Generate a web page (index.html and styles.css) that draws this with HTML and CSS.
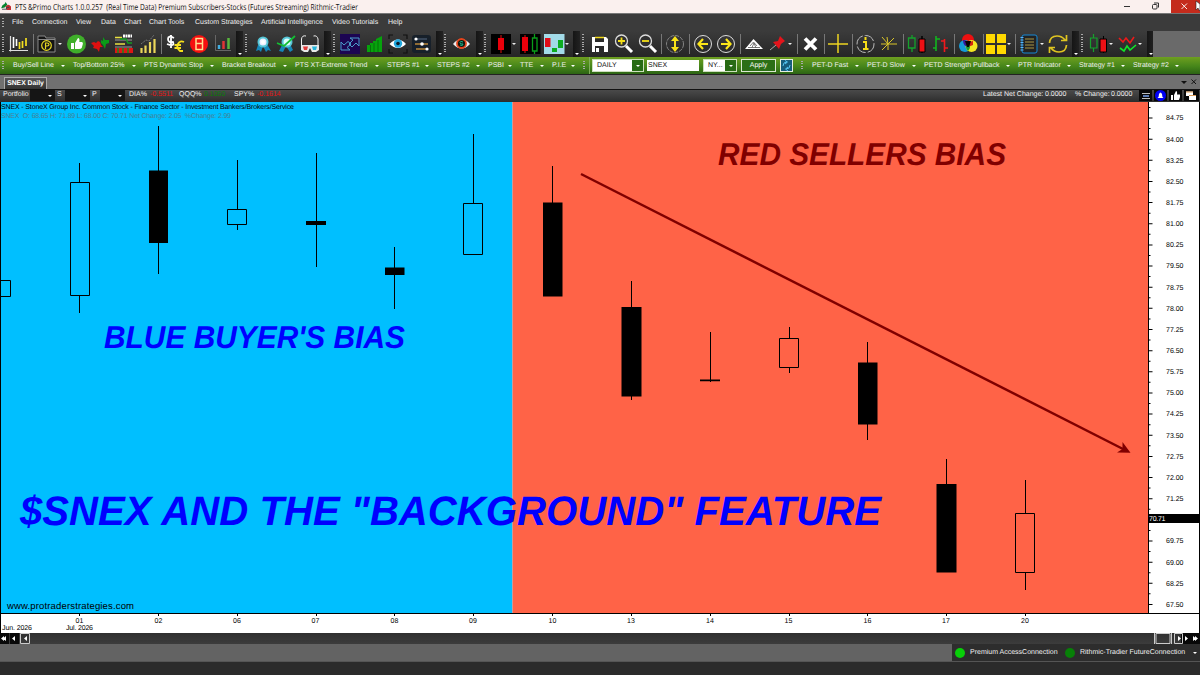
FILE: index.html
```html
<!DOCTYPE html>
<html lang="en-US">
<head>
	<meta charset="UTF-8">
	<meta name="viewport" content="width=device-width, initial-scale=1.0">
	<title>PTS &amp;Primo Charts</title>
	<link rel="stylesheet" href="styles.css">
</head>
<body>

	<!-- window title -->
	<div class="titlebar">
		<svg class="logo" viewBox="0 0 12 10"><path d="M0 7Q1 3 4 2L5 0L7 3L4 6Z" fill="#08852f"/><path d="M5 5Q8 1 11 5V9H6Z" fill="#c42c31"/><path d="M1 8H6V6H9" stroke="#444" fill="none"/></svg>
		<span class="title"><svg width="345" height="14"><text x="0" y="10.3" textLength="343" lengthAdjust="spacingAndGlyphs" xml:space="preserve">PTS &amp;Primo Charts 1.0.0.257  (Real Time Data) Premium Subscribers-Stocks (Futures Streaming) Rithmic-Tradier</text></svg></span>
		<svg class="window-buttons" viewBox="0 0 80 14">
			<path d="M4 6.5H10" stroke="#333"/>
			<rect x="32.500" y="4.500" width="4.500" height="4.500" rx="1" fill="none" stroke="#333"/><path d="M34 3H38.500V7.500" fill="none" stroke="#333"/>
			<rect x="51" width="29" height="13" fill="#c42b1c"/>
			<path d="M61.500 3.500L67 9M67 3.500L61.500 9" stroke="#fff" stroke-width=".9"/>
			<path d="M76 1V10L78 8L79.500 11L80 10V4Z" fill="#fff" stroke="#222" stroke-width=".6"/>
		</svg>
	</div>

	<div class="menu">
		<i class="grip"></i>
		<span>File</span><span>Connection</span><span>View</span><span>Data</span><span>Chart</span><span>Chart Tools</span><span>Custom Strategies</span><span>Artificial Intelligence</span><span>Video Tutorials</span><span>Help</span>
	</div>

	<!-- icons -->
	<div class="toolbar">
		<i class="grip"></i>
		<svg viewBox="0 0 20 20"><path d="M1.500 2V17.500M0 16.500H19" stroke="#ddd" stroke-width="1.200"/><path d="M4.500 3V14M7.500 5V12" stroke="#fff" stroke-width="1.600"/><path d="M10.500 8V15M13.500 7V14M17 4V12" stroke="#f4df20" stroke-width="1.700"/></svg>
		<i class="sep"></i>
		<svg viewBox="0 0 20 20"><path d="M1 18V2H8L9 4H18V18Z" fill="#151515" stroke="#888"/><path d="M1 5.500H18" stroke="#888"/><circle cx="9.500" cy="11.500" r="4.800" fill="none" stroke="#e9d923" stroke-width="1.200"/><path d="M8.500 15V9H10Q12 9 12 10.500T10 12H8" fill="none" stroke="#e9d923" stroke-width="1.200"/></svg>
		<i class="dd"></i>
		<svg viewBox="0 0 20 20"><circle cx="9.500" cy="10" r="9.500" fill="#3fae2a"/><path d="M4 9H7V15H4ZM8 9L11 4Q13 4 12.300 8H15Q16.500 8.500 15.700 10.500L14.700 14Q14 15 12 15H8Z" fill="#fff"/></svg>
		<svg viewBox="0 0 20 20"><path d="M0 9L3 8L5 9L7 7L9 8L10 11L12 13L9 13L8 18L6 15L2 14L3 12Z" fill="#e01010"/><path d="M10 6L12 7L12 3L14 6L18 6L18 9L15 10L14 15L12 11L10 9Z" fill="#0a9c18"/></svg>
		<svg viewBox="0 0 20 20"><path d="M1 3.500H8M1 10H11" stroke="#e9e040" stroke-width="1.600"/><path d="M1 6H18M1 13H18" stroke="#999"/><path d="M9 2H18" stroke="#fff" stroke-width="3" stroke-dasharray="2 .5"/><path d="M6 5H12L14 9H18" stroke="#159c20" stroke-width="1.500" fill="none"/><path d="M1 16.500H19" stroke="#dd1515" stroke-width="5"/><path d="M4 14V19M9 14V19M14 14V19" stroke="#18891c" stroke-width="1.500"/></svg>
		<svg viewBox="0 0 20 20"><path d="M3.500 19V14M7.500 19V11.500M12 19V8M16.500 19V5" stroke="#ead65a" stroke-width="2.200"/><path d="M3 10L8 6L11 7L16 1" stroke="#777" stroke-dasharray="2 1" fill="none"/></svg>
		<i class="sep"></i>
		<svg viewBox="0 0 20 20"><path d="M8 4Q2 1 2 5T7 8Q9 13 1 10M5 1V14" fill="none" stroke="#fff" stroke-width="1.800"/><path d="M18 8Q14 6 12 10T14 17H17M8.500 11H15M8.500 14H15" fill="none" stroke="#f5df1c" stroke-width="1.800"/></svg>
		<svg viewBox="0 0 20 20"><circle cx="9" cy="10" r="9" fill="#f60f0f"/><rect x="6" y="4.500" width="6.500" height="11" fill="#f60f0f" stroke="#ffdf90" stroke-width="1.500"/><path d="M6 9.500H12" stroke="#ffdf90" stroke-width="1.500"/></svg>
		<svg viewBox="0 0 20 20"><path d="M1.500 1V16.500H17" stroke="#666" fill="none"/><path d="M5 15V11" stroke="#42aee0" stroke-width="2.500"/><path d="M9.500 15V7" stroke="#e33436" stroke-width="2.500"/><path d="M14.500 15V4" stroke="#58b73e" stroke-width="2.500"/></svg>
		<i class="overflow"></i><i class="grip"></i>
		<svg viewBox="0 0 20 20"><path d="M4 11L2 17L5 16L7 18L9 12L12 18L14 16L17 17L13 10Z" fill="#1687b9"/><circle cx="9" cy="8" r="4.500" fill="#eef" stroke="#56c6d6" stroke-width="2"/><circle cx="9" cy="8" r="2" fill="#fff"/></svg>
		<svg viewBox="0 0 20 20"><path d="M6 11L3 17L7 18L10 12L14 18L17 16L14 10Z" fill="#1687b9"/><circle cx="11" cy="8" r="4.500" fill="#dff" stroke="#56c6d6" stroke-width="2"/><path d="M1 9L8 12L19 2" fill="none" stroke="#13bf32" stroke-width="1.700"/></svg>
		<svg viewBox="0 0 20 20"><path d="M1.500 12V5Q2 1 6 2M18 12V5Q17 1 13.500 2" fill="none" stroke="#eee"/><path d="M1 11H19V16L16 18H12L10 14L8 18H4L1 16Z" fill="#e8e8e8"/><path d="M3 12.500H8L7 16H4Z" fill="#e23b3b"/><path d="M12 12.500H17L16 16H13Z" fill="#26b4da"/></svg>
		<i class="overflow"></i><i class="grip"></i>
		<svg viewBox="0 0 20 20"><path d="M0 0H20V20H0Z" fill="#1c0552"/><path d="M1 8V16H10L7 13.500L11 10L8 7.500L4 11ZM10 4H19V12L16 9L12 13L9 10L13 6Z" fill="none" stroke="#4a9cca"/></svg>
		<svg viewBox="0 0 20 20"><path d="M1 18V11H4V9H7V7H10V5L16 2V18Z" fill="#06a30c"/><path d="M4.500 11V18M8 9V18M12 6V18" stroke="#075d0a" stroke-width=".7"/></svg>
		<svg viewBox="0 0 20 20"><path d="M1 5V1H5M15 1H19V5M19 15V19H15M5 19H1V15" fill="none" stroke="#111" stroke-width="1.200"/><path d="M1.500 10Q10 1 18 10Q10 18 1.500 10Z" fill="#fff"/><circle cx="10" cy="9.500" r="4.200" fill="#20a7de"/><circle cx="10" cy="9.500" r="1.800" fill="#081b29"/></svg>
		<svg viewBox="0 0 20 20"><rect y="1" width="19" height="18" rx="3" fill="#17202a"/><path d="M3 5H15" stroke="#425066" stroke-width="1.500"/><path d="M3 10H16M4 15H16" stroke="#b98538" stroke-width="1.500"/><circle cx="4" cy="5" r="1.600" fill="#fff"/><circle cx="10" cy="10" r="1.800" fill="#fff"/><circle cx="15" cy="15" r="1.600" fill="#fff"/></svg>
		<i class="overflow"></i><i class="grip"></i>
		<svg viewBox="0 0 20 20"><path d="M1 10Q9.500 0 18 10Q9.500 19 1 10Z" fill="#eee"/><circle cx="9.500" cy="9.500" r="4.500" fill="#12160e" stroke="#e4431b" stroke-width="1.800"/><path d="M11 8Q8 6.500 8 8.500T11 10Q11 12.500 8 11" fill="none" stroke="#19b58d"/></svg>
		<i class="overflow"></i><i class="grip"></i>
		<svg viewBox="0 0 20 20"><path d="M0 0H20V20H0Z" fill="#000"/><path d="M10 1V19" stroke="#d11"/><path d="M7 4H13V16H7Z" fill="#e9000b"/></svg>
		<i class="dd"></i>
		<svg viewBox="0 0 20 20"><path d="M0 0H20.500V20H0Z" fill="#000"/><path d="M5 1V19" stroke="#d11"/><path d="M2 3H8V17H2Z" fill="#e9000b"/><path d="M14.500 0V4M14.500 17V20M12.500 4H17V17H12.500Z" stroke="#099e1a" fill="none" stroke-width="1.300"/></svg>
		<svg viewBox="0 0 20 20"><path d="M0 0H20.500V20H0Z" fill="#a3dbe8"/><path d="M1 4H6.500V13H1Z" fill="#e00c17"/><path d="M8 14H13V18H8ZM14 6H19V14H14Z" fill="#0cac20"/></svg>
		<i class="dd"></i><i class="overflow"></i><i class="grip"></i>
		<svg viewBox="0 0 20 20"><path d="M2 3H16L18 5V18H2Z" fill="#fff"/><path d="M5 3H14V8H5Z" fill="#292929"/><path d="M5 3.500H14" stroke="#f1d81a" stroke-width="1.500"/><path d="M5 12H14V18H5Z" fill="#292929"/><path d="M6 14H9V18H6Z" fill="#fff"/></svg>
		<svg viewBox="0 0 20 20"><circle cx="7.500" cy="7" r="6" fill="#303030" stroke="#ddd" stroke-width="1.300"/><path d="M12 12L18 18" stroke="#fff" stroke-width="3"/><path d="M4 7H11M7.500 3.500V10.500" stroke="#f4df18" stroke-width="1.800"/></svg>
		<svg viewBox="0 0 20 20"><circle cx="7.500" cy="7" r="6" fill="#303030" stroke="#ddd" stroke-width="1.300"/><path d="M12 12L18 18" stroke="#fff" stroke-width="3"/><path d="M4 7H11" stroke="#f4df18" stroke-width="1.800"/></svg>
		<i class="sep"></i>
		<svg viewBox="0 0 20 20"><circle cx="9" cy="10" r="8.500" fill="none" stroke="#999" stroke-width=".8" stroke-dasharray="4 1"/><path d="M9 2L13 7H10V13H13L9 18L5 13H8V7H5Z" fill="#f8e319"/></svg>
		<i class="sep"></i>
		<svg viewBox="0 0 20 20"><circle cx="10" cy="10" r="8.500" fill="none" stroke="#ddd"/><path d="M10 5L5.500 10L10 15M5.500 10H15" fill="none" stroke="#fce619" stroke-width="2.200"/></svg>
		<svg viewBox="0 0 20 20"><circle cx="9" cy="10" r="8.500" fill="none" stroke="#ddd"/><path d="M9 5L13.500 10L9 15M13.500 10H4" fill="none" stroke="#fce619" stroke-width="2.200"/></svg>
		<i class="sep"></i>
		<svg viewBox="0 0 20 20"><path d="M1 15L9.500 5L19 15Z" fill="#fff"/><path d="M6 12L9.500 8L13 12M4 13.500H16M8 13.500L10 9L12 14" fill="none" stroke="#555" stroke-width=".8"/></svg>
		<svg viewBox="0 0 20 20"><path d="M2 16L8 11" stroke="#aaa"/><path d="M12 2L17 7L13 10L11 15L5 8L10 7Z" fill="#e3141b"/></svg>
		<i class="dd"></i><i class="sep"></i>
		<svg viewBox="0 0 20 20"><path d="M4 4.500L15 15.500M15 4.500L4 15.500" stroke="#fff" stroke-width="3.800"/></svg>
		<i class="sep"></i>
		<svg viewBox="0 0 20 20"><path d="M0 10H20M10 0V19" stroke="#edd421" stroke-width="1.500"/></svg>
		<i class="sep"></i>
		<svg viewBox="0 0 20 20"><circle cx="9.500" cy="10" r="8.500" fill="none" stroke="#bbb" stroke-dasharray="11 2"/><path d="M9.500 3V6M7 8H10V14M7 15H12.500" fill="none" stroke="#f5dc18" stroke-width="2"/></svg>
		<svg viewBox="0 0 20 20"><path d="M3 10H19M10 10L4 3M10 10L9 3M10 10L16 4M10 10L4 16M10 10L10 16" stroke="#dbc629"/></svg>
		<i class="sep"></i>
		<svg viewBox="0 0 20 20"><path d="M5 1V4M5 14V18M1.500 4H8V14H1.500Z" fill="none" stroke="#15a22c" stroke-width="1.300"/><path d="M15 2V19" stroke="#000" stroke-width="1.500"/><path d="M12 5H18V18H12Z" fill="#ed1015" stroke="#000"/></svg>
		<svg viewBox="0 0 20 20"><path d="M6 2V17M3 14H6M6 5H10" fill="none" stroke="#12b51f" stroke-width="1.600"/><path d="M14.500 5V18M11 7H15M15 14H18" fill="none" stroke="#f1191d" stroke-width="1.600"/></svg>
		<i class="sep"></i>
		<svg viewBox="0 0 20 20"><circle cx="9" cy="6" r="6" fill="#ed1010"/><circle cx="6" cy="12" r="6" fill="#159bd9"/><circle cx="12.500" cy="12" r="6" fill="#f3e622"/><path d="M4 6Q9 5 9 13Q4 12 4 6Z" fill="#3a1596"/><path d="M14 7Q9 7 9 13L14 11Z" fill="#d62711"/><path d="M9 10Q13 13 9 17Q5 13 9 10Z" fill="#159c37"/><path d="M6 7H12L10 13H8Z" fill="#050505"/></svg>
		<i class="sep"></i>
		<svg viewBox="0 0 20 20"><path d="M0 0H9V9H0ZM11 0H20V9H11ZM0 11H9V20H0ZM11 11H20V20H11Z" fill="#ffd900"/></svg>
		<i class="dd"></i><i class="sep"></i>
		<svg viewBox="0 0 20 20"><rect x="3" y="1" width="15" height="18" rx="2" fill="#222" stroke="#1689d6"/><path d="M3 3V18" stroke="#58b6ff" stroke-width="3" stroke-dasharray="1 1.500"/><path d="M6 5H15M6 8H15M6 11H15M6 14H15" stroke="#a99645"/></svg>
		<i class="dd"></i>
		<svg viewBox="0 0 20 20"><path d="M1.500 9Q2 2 9 2Q14 2 17 6M18.500 1V6.500H13M18.500 11Q18 18 11 18Q6 18 3 14M1.500 19V13.500H7" fill="none" stroke="#dfc421" stroke-width="1.700"/></svg>
		<i class="overflow"></i><i class="grip"></i>
		<svg viewBox="0 0 20 20"><path d="M4.500 0V4M4.500 14V18M1.500 4H8V14H1.500Z" fill="none" stroke="#15a22c" stroke-width="1.200"/><path d="M14.500 2V19" stroke="#000"/><path d="M11 5H17.500V18H11Z" fill="#ed1015" stroke="#000"/></svg>
		<i class="dd"></i>
		<svg viewBox="0 0 20 20"><path d="M1 4L5 8L8 4L12 9L16 3" fill="none" stroke="#ed1919" stroke-width="1.600"/><path d="M2 14L6 17L9 12L12 16L18 11" fill="none" stroke="#12e529" stroke-width="1.600"/></svg>
		<i class="dd"></i><i class="overflow"></i><i class="empty"></i>
	</div>

	<div class="strategies">
		<i class="grip"></i>
		<span class="drop">Buy/Sell Line</span><span class="drop">Top/Bottom 25%</span><span class="drop">PTS Dynamic Stop</span><span class="drop">Bracket Breakout</span><span class="drop">PTS XT-Extreme Trend</span><span class="drop">STEPS #1</span><span class="drop">STEPS #2</span><span class="drop">PSBI</span><span class="drop">TTE</span><span class="drop">P.I.E</span>
		<i class="grip"></i>
		<div class="inputs">
			<span class="combo daily">DAILY</span>
			<span class="symbol">SNEX</span>
			<span class="combo exchange">NY...</span>
			<span class="apply">Apply</span>
			<svg class="reload" viewBox="0 0 13 13"><path d="M0 0H13V13H0Z" fill="#e8efe0"/><path d="M1 1H12V12H1Z" fill="#175c7c"/><path d="M3 7Q3 3 7 3M5 1.500L7.500 3L5 5M10 6Q10 10 6 10M8 8L5.500 10L8 12" fill="none" stroke="#55c2f0"/></svg>
		</div>
		<i class="grip"></i>
		<span class="drop">PET-D Fast</span><span class="drop">PET-D Slow</span><span class="drop">PETD Strength Pullback</span><span class="drop">PTR Indicator</span><span class="drop">Strategy #1</span><span class="drop">Strategy #2</span>
	</div>

	<div class="tabs">
		<span class="tab">SNEX Daily</span>
		<svg viewBox="0 0 20 10"><path d="M1 4H7L4 7Z" fill="#111"/><path d="M11.500 2.500L16 7M16 2.500L11.500 7" stroke="#111"/></svg>
	</div>

	<div class="portfolio">
		<span>Portfolio</span><i class="pick"></i><span>S</span><i class="pick"></i><span>P</span><i class="pick"></i>
		<span>DIA%</span><span class="down">-0.5511</span><span>QQQ%</span><span class="up">0.1050</span><span>SPY%</span><span class="down">-0.1614</span>
		<span>Latest Net Change:</span><span>0.0000</span><span>% Change:</span><span>0.0000</span>
		<svg viewBox="0 0 62 11">
			<path d="M0 0H13V11H0ZM15 0H28V11H15ZM30 0H43V11H30ZM45 0H60V11H45Z" fill="#080808"/>
			<path d="M3 3.500H11M3 8.500H11" stroke="#bbb"/><path d="M4 6H10" stroke="#5b7bb5" stroke-width="2"/>
			<circle cx="21.500" cy="5.500" r="5.500" fill="#0000f4"/><path d="M18.500 8Q20 7 20 4Q21.500 1 23 4Q23 7 24.500 8Z" fill="#fff"/>
			<path d="M32 5H34V10H32ZM35 5L37 1Q38.500 1 38 4.500H41V7L40 10H35Z" fill="#fff"/>
			<path d="M47 1.500H54V6H47ZM50 5H57V10H50Z" fill="#fff"/><path d="M47 2H54M50 5.500H57" stroke="#dc9a56"/>
		</svg>
	</div>

	<!-- chart: page pixels are used as the svg units -->
	<svg class="chart" viewBox="0 102 1200 531">
		<rect y="102" width="1200" height="531" fill="#fff"/>
		<rect y="102" width="512.500" height="511" fill="#00bfff"/>
		<rect x="512.500" y="102" width="636" height="511" fill="#ff6347"/>
		<path class="frame" d="M.5 102V633M0 613.500H1200M1148.500 102V613M1199.500 102V633"/>

		<g class="candles">
			<path d="M.5 228V360M79.500 163V182.500M79.500 295.500V313M158.500 126V274M237.500 160V210M237.500 225V230M316.500 153V267M394.500 247V309M473.500 134V203.500M552.500 166V296M631.500 281V400M710.500 332V382M789.500 327V338.500M789.500 367.500V373M867.500 342V440M946.500 459V572M1025.500 480V514M1025.500 572V590"/>
			<path class="open" d="M.5 280.500H10.500V296.500H.5ZM70.500 182.500H89.500V295.500H70.500ZM227.500 209.500H246.500V224.500H227.500ZM463.500 203.500H482.500V254.500H463.500ZM779.500 338.500H798.500V367.500H779.500ZM1015.500 513.500H1034.500V572.500H1015.500Z"/>
			<path class="filled" d="M149 170.500H168V243H149ZM306 221H326V225H306ZM385 267.500H404.500V275H385ZM543 202.500H562.500V296.500H543ZM621.500 307H641.500V396.500H621.500ZM700 379.500H720V381.300H700ZM858 362.500H877.500V424.500H858ZM936.500 484H956.500V572.500H936.500Z"/>
		</g>

		<path d="M581 174L1124 449.500" stroke="#800000" stroke-width="2.500"/>
		<path d="M1130.500 452.800L1122.500 442L1122.500 449L1117 452.500Z" fill="#800000"/>

		<text class="note" x="104" y="347.500" font-size="31.500" textLength="301" lengthAdjust="spacingAndGlyphs" fill="#0000ff">BLUE BUYER'S BIAS</text>
		<text class="note" x="718" y="164.500" font-size="31.500" textLength="288" lengthAdjust="spacingAndGlyphs" fill="#800000">RED SELLERS BIAS</text>
		<text class="note" x="20" y="525" font-size="41.200" textLength="861" lengthAdjust="spacingAndGlyphs" fill="#0000ff">$SNEX AND THE "BACKGROUND" FEATURE</text>

		<text x="1" y="108.700" textLength="293">SNEX - StoneX Group Inc. Common Stock - Finance Sector - Investment Bankers/Brokers/Service</text>
		<text class="quote" x="1" y="118" textLength="230" xml:space="preserve">SNEX  O: 68.65 H: 71.89 L: 68.00 C: 70.71 Net Change: 2.05  %Change: 2.99</text>
		<text x="7" y="608.500" font-size="9.500" textLength="127">www.protraderstrategies.com</text>

		<path class="tick" d="M79.500 613V616M158.500 613V616M237.500 613V616M316.500 613V616M394.500 613V616M473.500 613V616M552.500 613V616M631.500 613V616M710.500 613V616M789.500 613V616M867.500 613V616M946.500 613V616M1025.500 613V616"/>
		<g class="dates">
			<text x="79.500" y="622.500">01</text><text x="158.500" y="622.500">02</text><text x="237" y="622.500">06</text><text x="315.500" y="622.500">07</text><text x="394.500" y="622.500">08</text><text x="473" y="622.500">09</text><text x="552.500" y="622.500">10</text><text x="631" y="622.500">13</text><text x="710" y="622.500">14</text><text x="788.500" y="622.500">15</text><text x="867.500" y="622.500">16</text><text x="946" y="622.500">17</text><text x="1025" y="622.500">20</text>
			<text x="17" y="630" textLength="30">Jun. 2026</text><text x="79.500" y="630" textLength="27">Jul. 2026</text>
		</g>

		<line class="scale" x1="1150.500" x2="1150.500" y1="117.500" y2="606"/>
		<line class="scale half" x1="1149.500" x2="1149.500" y1="106.900" y2="606"/>
		<g class="prices">
			<text x="1166" y="120.300">84.75</text><text x="1166" y="141.500">84.00</text><text x="1166" y="162.600">83.25</text><text x="1166" y="183.800">82.50</text><text x="1166" y="204.900">81.75</text><text x="1166" y="226.100">81.00</text><text x="1166" y="247.200">80.25</text><text x="1166" y="268.400">79.50</text><text x="1166" y="289.500">78.75</text><text x="1166" y="310.700">78.00</text><text x="1166" y="331.800">77.25</text><text x="1166" y="353">76.50</text><text x="1166" y="374.100">75.75</text><text x="1166" y="395.300">75.00</text><text x="1166" y="416.400">74.25</text><text x="1166" y="437.600">73.50</text><text x="1166" y="458.700">72.75</text><text x="1166" y="479.900">72.00</text><text x="1166" y="501">71.25</text><text x="1166" y="543.300">69.75</text><text x="1166" y="564.500">69.00</text><text x="1166" y="585.600">68.25</text><text x="1166" y="606.800">67.50</text>
		</g>
		<rect x="1148" y="514" width="52" height="9" fill="#000"/>
		<text x="1149" y="521" fill="#fff" textLength="16.500">70.71</text>
	</svg>

	<div class="scrollbar">
		<svg viewBox="0 0 30 11"><path d="M0 0H9V11H0ZM10 0H19V11H10Z" fill="#080808"/><path d="M4 3V8L1 5.500ZM6 3V8L3 5.500ZM15 3V8L12 5.500ZM27 3V8L24 5.500Z" fill="#fff"/><path d="M20.500 .5H29.500V10.500H20.500Z" fill="none" stroke="#ccc"/></svg>
		<svg class="right" viewBox="0 0 47 11"><path d="M28 0H47V11H28Z" fill="#080808"/><path d="M1.500 0V11M3 .5H17V10.500H3ZM18.500 0V11M21.500 .5H29.500V10.500H21.500Z" fill="none" stroke="#ccc"/><path d="M25 3V8L28 5.500ZM32 3V8L35 5.500ZM40 3V8L43 5.500ZM42 3V8L45 5.500Z" fill="#fff"/></svg>
	</div>

	<div class="status">
		<div class="connections">
			<i class="light"></i><span>Premium AccessConnection</span>
			<i class="light dim"></i><span class="drop">Rithmic-Tradier FutureConnection</span>
		</div>
	</div>

</body>
</html>
```
FILE: styles.css
```css
body {
	margin: 0;
	width: 1200px;
	height: 675px;
	overflow: hidden;
	display: flex;
	flex-direction: column;
	background: #2b2b2b;
	color: #f0f0f0;
	font: 7px/10px "Liberation Sans", Arial, sans-serif;
	text-rendering: geometricPrecision;
	white-space: nowrap;
}
svg {
	display: block;
	overflow: visible;
}

/* title */
.titlebar {
	height: 14px;
	flex: none;
	display: flex;
	background: #faf0ee;
	border-bottom: 1px solid #777;
	box-sizing: border-box;
}
.logo {
	width: 11px;
	height: 9px;
	margin: 2px 3px 0 1px;
}
.title {
	font: 8.4px "Open Sans", "Noto Sans", sans-serif;
}
.title text {
	fill: #111;
}
.window-buttons {
	width: 80px;
	height: 14px;
	margin-left: auto;
	overflow: hidden;
}

/* menu, the columns are the widths of the items */
.menu {
	height: 17px;
	flex: none;
	display: grid;
	grid-template-columns: 10px 20px 44px 25px 23px 25px 46px 66px 71px 56px auto;
	align-items: center;
	padding-left: 2px;
	background: #3b3b3b;
	line-height: 15px;
}
.grip {
	width: 2px;
	height: 10px;
	background: repeating-linear-gradient(#aaa 0 1px, transparent 1px 2.5px);
}

/* icon strip */
.toolbar {
	height: 26px;
	flex: none;
	display: grid;
	grid-template-columns:
		7px 24px 4px 20px 10px 24px 23px 24px 23px 5px 24px 24px 22px 9px
		9px 22px 24px 24px 9px
		7px 26px 22px 24px 24px 8px
		8px 24px 8px
		7px 20px 9px 24px 20px 9px 9px
		8px 24px 24px 23px 5px 23px 4px 24px 23px 4px 24px 19px 10px 4px 23px 4px 24px 4px 22px 25px 4px 23px 24px 5px 24px 3px 20px 9px 4px 20px 9px 24px 9px
		8px 19px 10px 19px 10px 6px 47px;
	align-items: center;
	padding-left: 2px;
	background: linear-gradient(#3b3b3b, #262626);
}
.toolbar svg {
	width: 20px;
	height: 20px;
}
.toolbar .grip {
	height: 20px;
}
.sep {
	width: 1px;
	height: 20px;
	background: #777;
}
.dd {
	width: 0;
	margin-left: 1px;
	border: 2px solid transparent;
	border-top-color: #eee;
	border-bottom: 0;
}
.overflow {
	width: 7px;
	height: 26px;
	background: linear-gradient(90deg, #151515, #222);
	display: flex;
	align-items: flex-end;
}
.overflow::after {
	content: "";
	border: 2px solid transparent;
	border-top-color: #fff;
	border-bottom: 0;
	margin: 0 0 2px 2px;
	box-shadow: 0 -2px 0 -1px #ddd;
}
.empty {
	height: 26px;
	background: #6a6a6a;
}

/* green bar */
.strategies {
	height: 17px;
	flex: none;
	display: grid;
	grid-template-columns: 11px 60px 71px 78px 73px 92px 50px 51px 32px 32px 31px 6px 212px 11px 55px 57px 94px 61px 54px 54px;
	align-items: center;
	padding-left: 2px;
	background: linear-gradient(#6e9f20, #46861a 55%, #2c6414);
	border-bottom: 1px solid #222;
}
.drop {
	display: flex;
	align-items: center;
	justify-content: space-between;
	padding-right: 8px;
}
.drop::after {
	content: "";
	border: 2px solid transparent;
	border-top-color: #fff;
	border-bottom: 0;
}
.inputs {
	height: 17px;
	display: flex;
	align-items: center;
	color: #111;
	border-left: 1px solid #7fae5a;
	padding-left: 2px;
	margin-right: 5px;
}
.combo,
.symbol,
.apply {
	height: 13px;
	line-height: 13px;
	box-sizing: border-box;
	background: #fff;
	padding-left: 4px;
}
.combo {
	display: flex;
	align-items: center;
	justify-content: space-between;
	border: 1px solid #cde0bd;
	background: linear-gradient(90deg, #fff calc(100% - 11px), #286b15 calc(100% - 11px));
}
.combo::after {
	content: "";
	border: 2.5px solid transparent;
	border-top-color: #fff;
	border-bottom: 0;
	margin-right: 3px;
}
.daily {
	width: 52px;
}
.symbol {
	width: 52px;
	height: 11px;
	line-height: 11px;
	margin: 0 4px 1px 3px;
	padding-left: 1px;
}
.exchange {
	width: 34px;
}
.apply {
	width: 35px;
	margin: 0 4px;
	padding: 0;
	border: 1px solid #dce8d2;
	background: #2c6f16;
	color: #fff;
	line-height: 11px;
	text-align: center;
}
.reload {
	width: 13px;
	height: 13px;
}

/* tab */
.tabs {
	height: 14px;
	flex: none;
	display: flex;
	justify-content: space-between;
	align-items: flex-end;
	background: #707070;
	border-bottom: 1px solid #111;
}
.tab {
	height: 12px;
	width: 43px;
	box-sizing: border-box;
	margin-left: 4px;
	border: 1px solid #aaa;
	border-bottom: 0;
	background: linear-gradient(#555, #333);
	font-weight: bold;
	font-size: 6.8px;
	line-height: 11px;
	text-align: center;
	color: #fff;
}
.tabs svg {
	width: 20px;
	height: 10px;
	margin-bottom: 2px;
}

.portfolio {
	height: 12px;
	flex: none;
	display: grid;
	grid-template-columns: 27px 27px 8px 27px 8px 29px 21px 29px 25px 30px 23px 726px 62px 30px 36px 28px 62px;
	align-items: start;
	padding-left: 3px;
	background: linear-gradient(#4a4a4a, #2d2d2d);
	line-height: 9px;
}
.portfolio svg {
	width: 62px;
	height: 11px;
}
.pick {
	width: 25px;
	height: 11px;
	background: #151515;
	display: flex;
	align-items: center;
	justify-content: flex-end;
}
.pick::after {
	content: "";
	border: 2.5px solid transparent;
	border-top-color: #fff;
	border-bottom: 0;
	margin-right: 3px;
}
.up {
	color: #087c08;
}
.down {
	color: #e21414;
}

/* chart */
.chart {
	width: 1200px;
	height: 531px;
	flex: none;
	font-size: 7px;
}
.frame,
.tick,
.candles path {
	stroke: #000;
	fill: none;
}
.candles .filled {
	fill: #000;
	stroke: none;
}
.note {
	font-weight: bold;
	font-style: italic;
}
.quote {
	fill: #477f94;
}
.dates text {
	text-anchor: middle;
}
/* one dash for each 0.75 of price */
.scale {
	stroke: #000;
	stroke-width: 4;
	stroke-dasharray: 1 20.15;
}
.half {
	stroke-width: 2;
}

/* bottom */
.scrollbar {
	height: 11px;
	flex: none;
	display: flex;
	justify-content: space-between;
	background: linear-gradient(#303030, #3c3c3c);
}
.scrollbar svg {
	width: 30px;
	height: 11px;
}
.scrollbar .right {
	width: 47px;
}
.status {
	height: 17px;
	flex: none;
	display: flex;
	justify-content: flex-end;
	background: #636363;
	border-bottom: 1px solid #555;
}
.connections {
	width: 248px;
	box-sizing: border-box;
	display: grid;
	grid-template-columns: 15px 95px 15px auto;
	align-items: center;
	padding-left: 3px;
	background: #2d2d2d;
	line-height: 8px;
}
.connections .drop {
	padding-right: 3px;
}
.light {
	width: 10px;
	height: 10px;
	border-radius: 50%;
	background: #08cf08;
}
.dim {
	background: #078007;
}
```
